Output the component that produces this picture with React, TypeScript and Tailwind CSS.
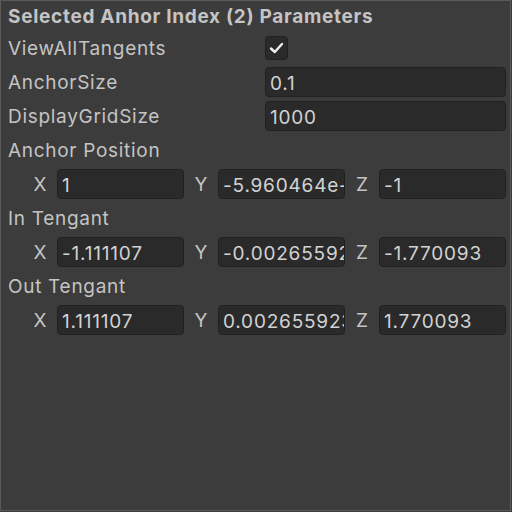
import React from "react";

const font = { fontFamily: "Inter, 'Noto Sans', sans-serif" };

function Field({ value }: { value: string }) {
  return (
    <div className="flex-1 min-w-0 h-[30px] rounded-[4px] bg-[#2a2a2a] border border-[#212121] flex items-center px-[4px] pt-[2px] overflow-hidden">
      <span className="whitespace-nowrap text-[#d2d2d2] text-[19px] tracking-[0.8px] leading-none">{value}</span>
    </div>
  );
}

function Vec({ x, y, z }: { x: string; y: string; z: string }) {
  return (
    <div className="h-[34px] flex items-center pl-[22px] pr-[4px]">
      <span className="w-[34px] pt-[2px] text-center text-[#c4c4c4] text-[19px]">X</span>
      <Field value={x} />
      <span className="w-[34px] pt-[2px] text-center text-[#c4c4c4] text-[19px]">Y</span>
      <Field value={y} />
      <span className="w-[34px] pt-[2px] text-center text-[#c4c4c4] text-[19px]">Z</span>
      <Field value={z} />
    </div>
  );
}

function Label({ text }: { text: string }) {
  return (
    <div className="h-[34px] flex items-center pl-[7px] pt-[2px] text-[#c4c4c4] text-[19px] tracking-[0.7px]">{text}</div>
  );
}

function PropRow({ label, children }: { label: string; children: React.ReactNode }) {
  return (
    <div className="h-[34px] flex items-center pl-[7px] pr-[4px]">
      <span className="w-[257px] pt-[2px] text-[#c4c4c4] text-[19px] tracking-[0.7px] whitespace-nowrap">{label}</span>
      <div className="flex-1 flex items-center">{children}</div>
    </div>
  );
}

export default function App() {
  return (
    <div className="w-[512px] h-[512px] bg-[#3c3c3c]" style={font}>
      <div className="w-[511px] h-[511px] border border-[#5a5a5a] bg-[#3c3c3c] flex flex-col">
        <div className="h-[30px] flex items-center pl-[7px] pt-[2px] text-[#c4c4c4] text-[19px] tracking-[0.7px] font-bold whitespace-nowrap">
          Selected Anhor Index (2) Parameters
        </div>
        <PropRow label="ViewAllTangents">
          <div className="w-[23px] h-[24px] rounded-[4px] bg-[#2a2a2a] border border-[#212121] flex items-center justify-center">
            <svg width="15" height="12" viewBox="0 0 15 12">
              <path d="M2 6.5 L5.8 10 L13 2" fill="none" stroke="#eeeeee" strokeWidth="2.4" strokeLinecap="round" strokeLinejoin="round" />
            </svg>
          </div>
        </PropRow>
        <PropRow label="AnchorSize">
          <Field value="0.1" />
        </PropRow>
        <PropRow label="DisplayGridSize">
          <Field value="1000" />
        </PropRow>
        <Label text="Anchor Position" />
        <Vec x="1" y="-5.960464e-08" z="-1" />
        <Label text="In Tengant" />
        <Vec x="-1.111107" y="-0.002655923" z="-1.770093" />
        <Label text="Out Tengant" />
        <Vec x="1.111107" y="0.002655923" z="1.770093" />
      </div>
    </div>
  );
}
